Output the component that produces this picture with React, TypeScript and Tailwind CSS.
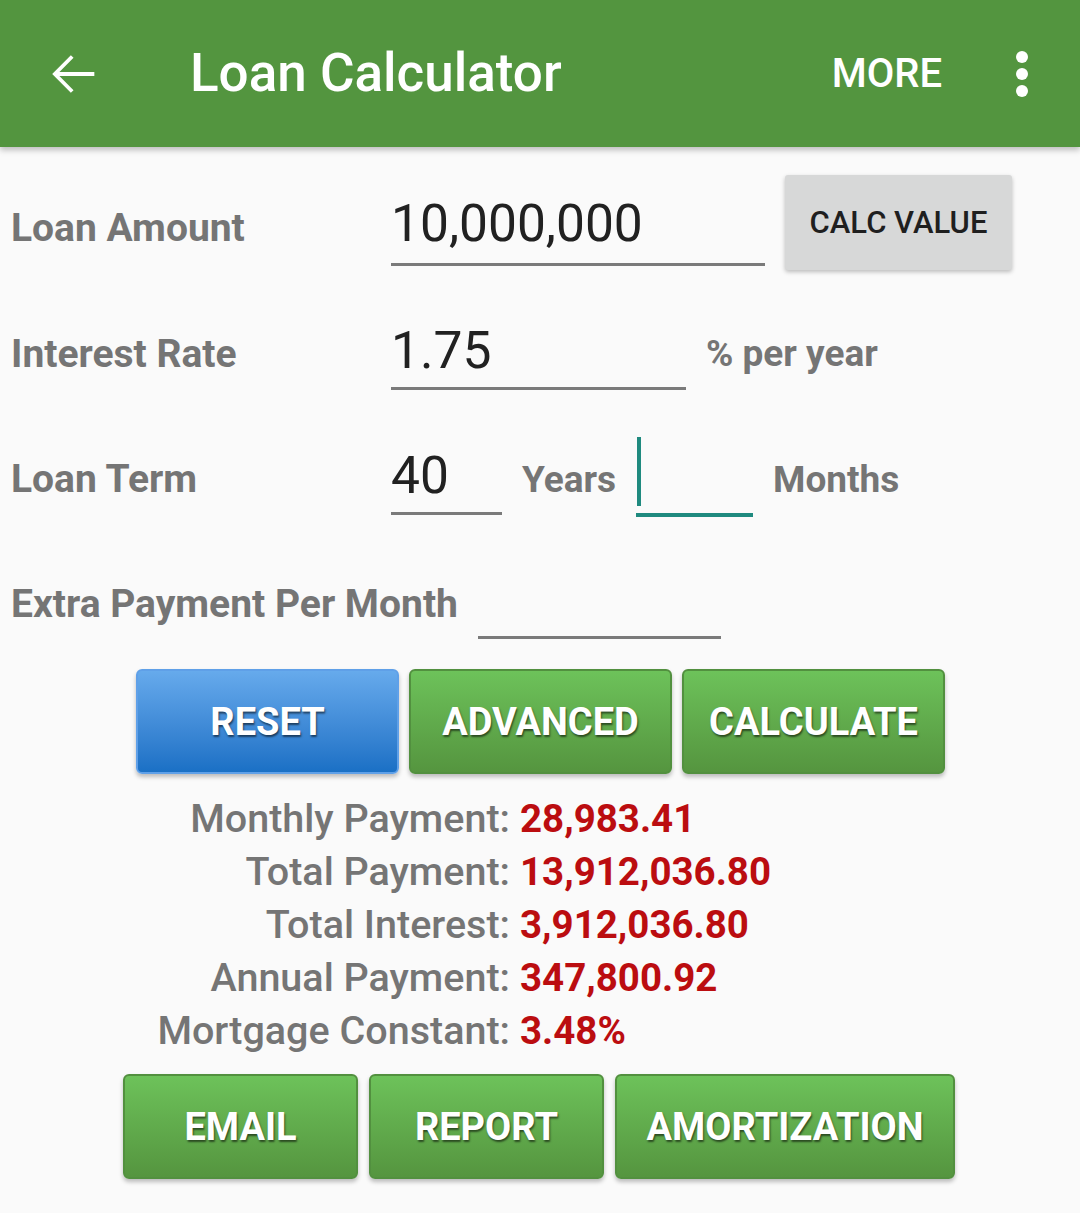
import React from "react";

const font = { fontFamily: "Roboto, 'Noto Sans', sans-serif" };

function Label({ children, className = "" }: { children: React.ReactNode; className?: string }) {
  return (
    <div className={`text-[37px] leading-none font-bold text-[#757575] whitespace-nowrap ${className}`}>
      {children}
    </div>
  );
}

function FieldLabel({ children, className = "" }: { children: React.ReactNode; className?: string }) {
  return (
    <div className={`text-[39px] leading-none font-bold text-[#757575] whitespace-nowrap ${className}`}>
      {children}
    </div>
  );
}

function GreenButton({ label, width }: { label: string; width: string }) {
  return (
    <div
      className={`${width} h-[105px] rounded-[6px] border-2 border-[#52903f] bg-gradient-to-b from-[#6dc25a] to-[#55953f] shadow-[0_3px_4px_rgba(0,0,0,0.25)] flex items-center justify-center text-white font-bold text-[38px] leading-none [text-shadow:1px_2px_2px_rgba(0,0,0,0.55)]`}
    >
      {label}
    </div>
  );
}

export default function App() {
  const results = [
    ["Monthly Payment:", "28,983.41"],
    ["Total Payment:", "13,912,036.80"],
    ["Total Interest:", "3,912,036.80"],
    ["Annual Payment:", "347,800.92"],
    ["Mortgage Constant:", "3.48%"],
  ];

  return (
    <div className="w-[1080px] h-[1213px] bg-[#fafafa] overflow-hidden" style={font}>
      {/* app bar */}
      <div className="relative z-10 h-[147px] bg-[#53953f] shadow-[0_3px_6px_rgba(0,0,0,0.25)] flex items-center">
        <svg className="ml-[41px] w-[64px] h-[64px]" viewBox="0 0 24 24" fill="white">
          <path d="M20 11.25H6.9l5.3-5.3-1-1L4.2 12l7 7.05 1-1-5.3-5.3H20z" />
        </svg>
        <div className="ml-[85px] text-white text-[53px] font-medium leading-none">Loan Calculator</div>
        <div className="ml-auto text-white text-[40px] font-medium leading-none">MORE</div>
        <div className="ml-[74px] mr-[52px] flex flex-col gap-[5px]">
          <div className="w-[12px] h-[12px] rounded-full bg-white" />
          <div className="w-[12px] h-[12px] rounded-full bg-white" />
          <div className="w-[12px] h-[12px] rounded-full bg-white" />
        </div>
      </div>

      {/* form */}
      <div className="pl-[11px]">
        <div className="h-[143px] flex items-start">
          <FieldLabel className="w-[380px] mt-[62px]">Loan Amount</FieldLabel>
          <div className="w-[374px] mt-[51px] pb-[13px] border-b-[3px] border-[#7a7a7a] text-[51.5px] leading-none text-[#212121]">
            10,000,000
          </div>
          <div className="ml-[20px] mt-[28px] w-[227px] h-[95px] bg-[#d7d8d8] rounded-[3px] shadow-[0_2px_4px_rgba(0,0,0,0.25)] flex items-center justify-center text-[31px] font-medium text-[#1f1f1f] leading-none">
            CALC VALUE
          </div>
        </div>

        <div className="h-[125px] flex items-start">
          <FieldLabel className="w-[380px] mt-[45px]">Interest Rate</FieldLabel>
          <div className="w-[295px] mt-[35px] pb-[10px] border-b-[3px] border-[#7a7a7a] text-[51.5px] leading-none text-[#212121]">
            1.75
          </div>
          <Label className="ml-[20px] mt-[45px]">% per year</Label>
        </div>

        <div className="h-[125px] flex items-start">
          <FieldLabel className="w-[380px] mt-[45px]">Loan Term</FieldLabel>
          <div className="w-[111px] mt-[35px] pb-[10px] border-b-[3px] border-[#7a7a7a] text-[51.5px] leading-none text-[#212121]">
            40
          </div>
          <Label className="ml-[20px] mt-[46px]">Years</Label>
          <div className="ml-[20px] mt-[22px] w-[117px] h-[80px] border-b-[4px] border-[#1f8a7f]">
            <div className="ml-[1px] w-[4px] h-[69px] bg-[#1f8a7f]" />
          </div>
          <Label className="ml-[20px] mt-[46px]">Months</Label>
        </div>

        <div className="h-[129px] flex items-start">
          <FieldLabel className="w-[467px] mt-[45px]">Extra Payment Per Month</FieldLabel>
          <div className="w-[243px] mt-[47px] h-[52px] border-b-[3px] border-[#7a7a7a]" />
        </div>
      </div>

      {/* action buttons */}
      <div className="flex justify-center gap-[10px] pl-[1px]">
        <div className="w-[263px] h-[105px] rounded-[6px] border-2 border-[#5fa0e8] bg-gradient-to-b from-[#66aaec] to-[#1a70c5] shadow-[0_3px_4px_rgba(0,0,0,0.25)] flex items-center justify-center text-white font-bold text-[38px] leading-none [text-shadow:1px_2px_2px_rgba(0,0,0,0.55)]">
          RESET
        </div>
        <GreenButton label="ADVANCED" width="w-[263px]" />
        <GreenButton label="CALCULATE" width="w-[263px]" />
      </div>

      {/* results */}
      <div className="mt-[18px] leading-[53px]">
        {results.map(([k, v]) => (
          <div key={k} className="flex">
            <div className="w-[510px] text-right font-medium text-[39.5px] text-[#757575]">{k}</div>
            <div className="pl-[10px] font-bold text-[38.5px] text-[#bb0d10]">{v}</div>
          </div>
        ))}
      </div>

      <div className="mt-[17px] flex justify-center gap-[11px] pr-[2px]">
        <GreenButton label="EMAIL" width="w-[235px]" />
        <GreenButton label="REPORT" width="w-[235px]" />
        <GreenButton label="AMORTIZATION" width="w-[340px]" />
      </div>
    </div>
  );
}
